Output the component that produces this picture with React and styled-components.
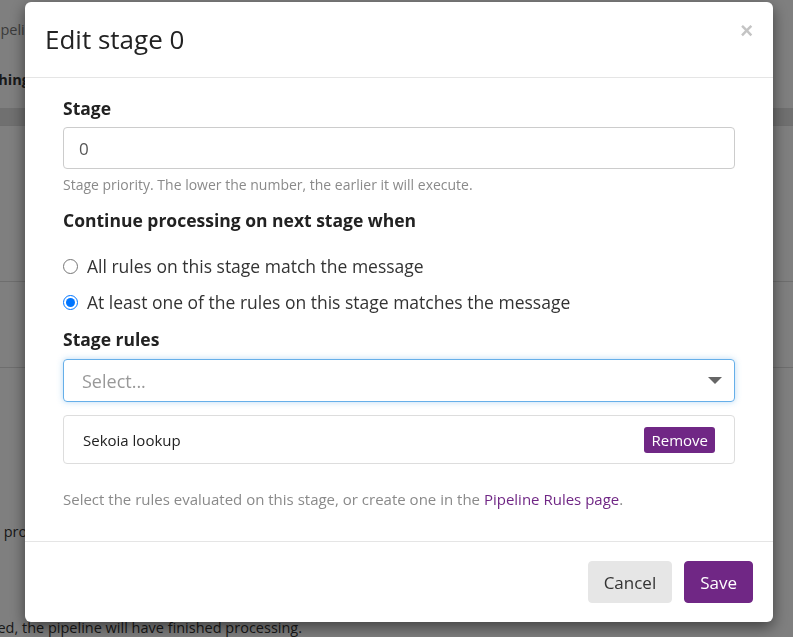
import styled, { createGlobalStyle } from "styled-components";

const GlobalStyle = createGlobalStyle`
  html, body {
    margin: 0;
    padding: 0;
    background: #fff;
    font-family: "Open Sans", "DejaVu Sans", sans-serif;
    color: #333;
  }
  * { box-sizing: border-box; }
`;

// page behind the modal
const Page = styled.div`
  height: 637px;
  overflow: hidden;
  margin-left: -200px;
  font-size: 14.5px;
  color: #333;
  white-space: nowrap;
`;

const PageLine = styled.div`
  padding: ${(p) => p.pad || "0"};
  font-weight: ${(p) => (p.bold ? 700 : 400)};
  color: ${(p) => p.color || "#333"};
  border-bottom: ${(p) => (p.border ? "1px solid #ddd" : "none")};
  background: ${(p) => p.bg || "transparent"};
  height: ${(p) => p.h || "auto"};
`;

const Overlay = styled.div`
  position: fixed;
  inset: 0;
  background: rgba(0, 0, 0, 0.5);
  padding: 2px 20px 0 25px;
`;

const Modal = styled.div`
  width: 748px;
  background: #fff;
  border-radius: 6px;
  box-shadow: 0 5px 15px rgba(0, 0, 0, 0.5);
`;

const Header = styled.div`
  display: flex;
  justify-content: space-between;
  align-items: flex-start;
  padding: 23px 20px 24px 20px;
  border-bottom: 1px solid #e5e5e5;
`;

const Title = styled.h4`
  margin: 0;
  font-size: 26px;
  line-height: 28px;
  font-weight: 400;
  color: #222;
`;

const Close = styled.button`
  border: 0;
  background: none;
  padding: 0;
  margin-top: -5px;
  font-size: 22px;
  font-weight: 700;
  line-height: 1;
  color: #c4c4c4;
  font-family: "Liberation Sans", sans-serif;
`;

const Body = styled.div`
  padding: 19px 38px 32px;
`;

const Label = styled.div`
  font-size: 17.5px;
  line-height: 22px;
  font-weight: 700;
  color: #222;
  margin-bottom: ${(p) => p.mb || "0"};
`;

const TextInput = styled.div`
  height: 42px;
  border: 1px solid #ccc;
  border-radius: 4px;
  padding: 0 15px;
  display: flex;
  align-items: center;
  font-size: 17px;
  color: #555;
`;

const Help = styled.div`
  font-size: ${(p) => p.size || "14px"};
  line-height: 20px;
  color: #8a8a8a;
  margin: ${(p) => p.m || "0"};

  a {
    color: #702785;
    text-decoration: none;
  }
`;

const RadioGroup = styled.div`
  display: flex;
  flex-direction: column;
  gap: 12px;
  margin: 23px 0 14px;
`;

const RadioRow = styled.label`
  display: flex;
  align-items: center;
  gap: 9px;
  height: 24px;
  font-size: 17.5px;
  color: #333;

  input {
    margin: 0;
    width: 15px;
    height: 15px;
  }
`;

const SelectBox = styled.div`
  height: 43px;
  margin-top: 9px;
  border: 1px solid #66afe9;
  border-radius: 4px;
  box-shadow: 0 0 6px rgba(102, 175, 233, 0.45);
  display: flex;
  align-items: center;
  justify-content: space-between;
  padding: 0 12px 0 18px;
  font-size: 18px;
  color: #999;
`;

const Caret = styled.span`
  width: 0;
  height: 0;
  border-left: 7px solid transparent;
  border-right: 7px solid transparent;
  border-top: 7px solid #666;
`;

const RuleItem = styled.div`
  height: 49px;
  margin-top: 13px;
  border: 1px solid #ddd;
  border-radius: 4px;
  display: flex;
  align-items: center;
  justify-content: space-between;
  padding: 0 19px 0 19px;
  font-size: 15px;
  color: #222;
`;

const SmallButton = styled.button`
  background: #702785;
  color: #fff;
  border: 0;
  border-radius: 3px;
  height: 26px;
  padding: 0 7px;
  font-size: 15px;
  font-family: inherit;
`;

const Footer = styled.div`
  border-top: 1px solid #e5e5e5;
  padding: 19px 20px 19px;
  display: flex;
  justify-content: flex-end;
  gap: 12px;
`;

const Button = styled.button`
  height: 42px;
  padding: 0 15px;
  border-radius: 4px;
  font-size: 17px;
  font-family: inherit;
  border: 1px solid ${(p) => (p.primary ? "#702785" : "#e6e6e6")};
  background: ${(p) => (p.primary ? "#702785" : "#e6e6e6")};
  color: ${(p) => (p.primary ? "#fff" : "#333")};
`;

const App = () => {
  return (
    <>
      <GlobalStyle />
      <Page>
        <PageLine pad="20px 0 0 188px" color="#777" h="50px">Pipelines</PageLine>
        <PageLine pad="20px 0 0 162px" bold h="58px">Matching</PageLine>
        <PageLine bg="#e0e0e0" h="18px" border />
        <PageLine h="156px" border />
        <PageLine h="86px" border />
        <PageLine pad="154px 0 0 134px" h="250px">
          Messages processed
        </PageLine>
        <PageLine pad="0 0 0 21px">
          If no stage rules are satisfied, the pipeline will have finished processing.
        </PageLine>
      </Page>
      <Overlay>
        <Modal>
          <Header>
            <Title>Edit stage 0</Title>
            <Close>×</Close>
          </Header>
          <Body>
            <Label mb="8px">Stage</Label>
            <TextInput>0</TextInput>
            <Help m="6px 0 14px">
              Stage priority. The lower the number, the earlier it will execute.
            </Help>
            <Label>Continue processing on next stage when</Label>
            <RadioGroup>
              <RadioRow>
                <input type="radio" name="match" />
                All rules on this stage match the message
              </RadioRow>
              <RadioRow>
                <input type="radio" name="match" defaultChecked />
                At least one of the rules on this stage matches the message
              </RadioRow>
            </RadioGroup>
            <Label>Stage rules</Label>
            <SelectBox>
              Select...
              <Caret />
            </SelectBox>
            <RuleItem>
              Sekoia lookup
              <SmallButton>Remove</SmallButton>
            </RuleItem>
            <Help m="25px 0 0" size="15px">
              Select the rules evaluated on this stage, or create one in the{" "}
              <a href="#">Pipeline Rules page</a>.
            </Help>
          </Body>
          <Footer>
            <Button>Cancel</Button>
            <Button primary>Save</Button>
          </Footer>
        </Modal>
      </Overlay>
    </>
  );
};

export default App;
